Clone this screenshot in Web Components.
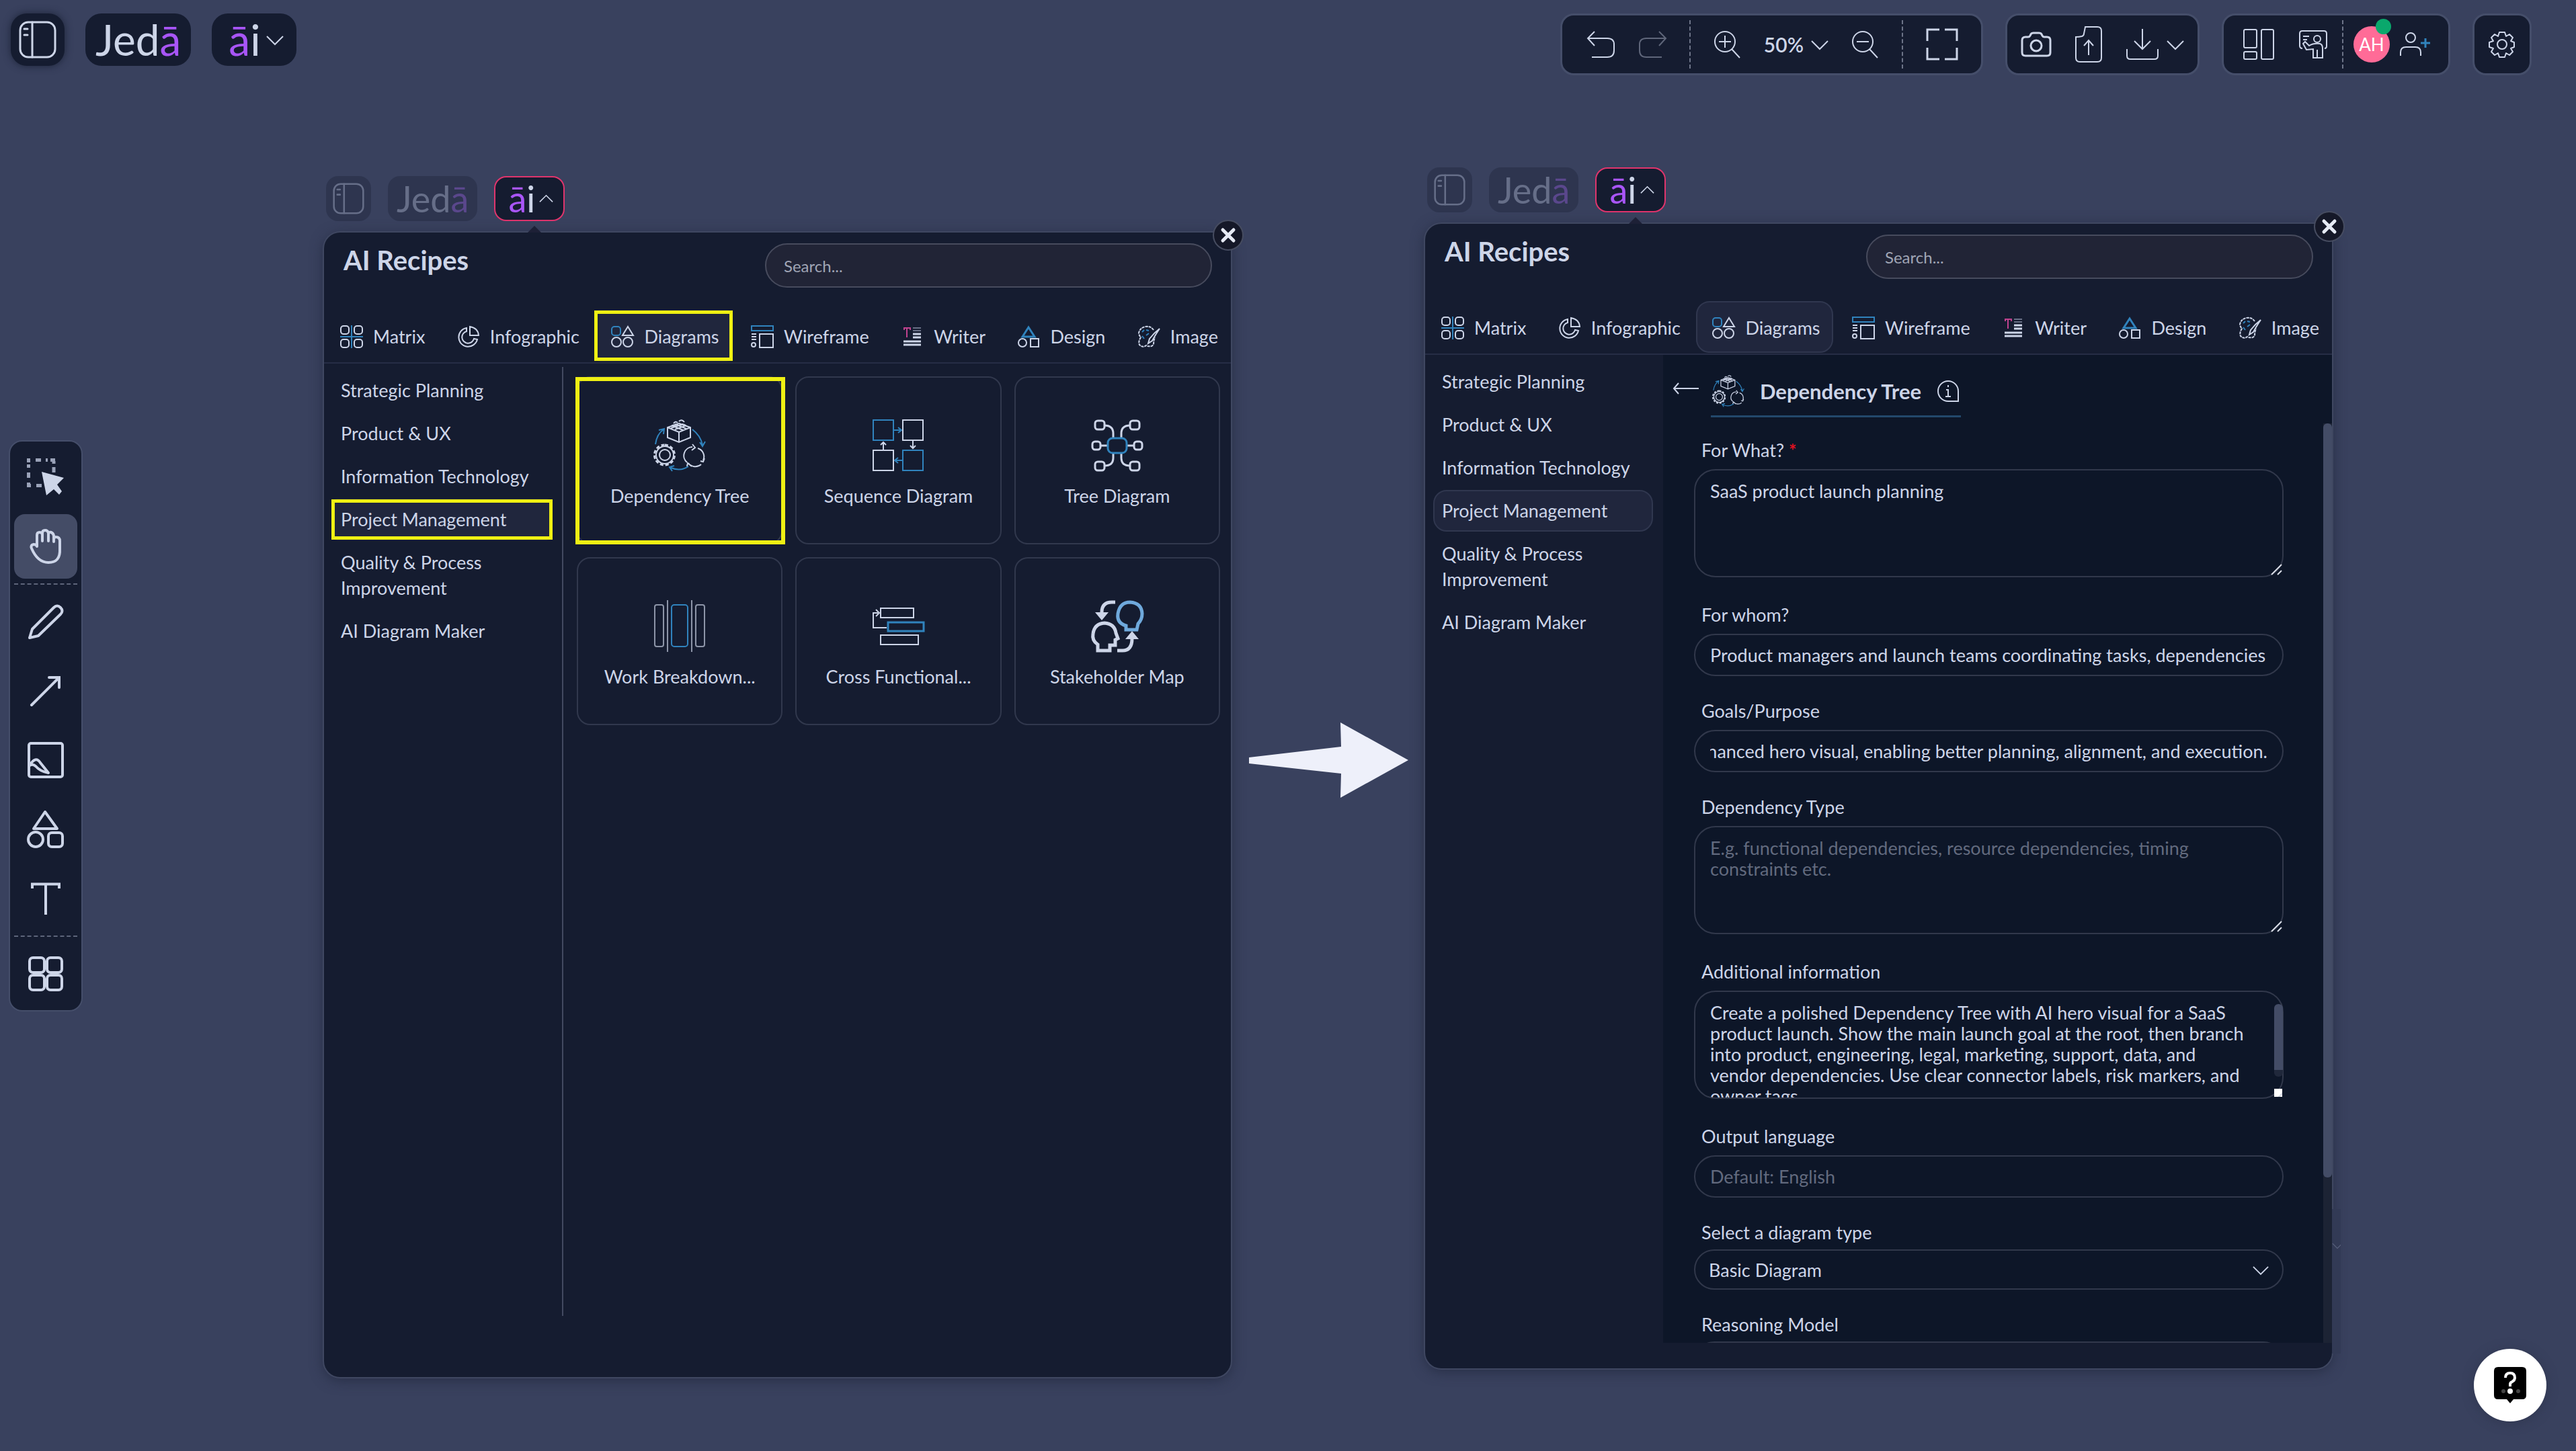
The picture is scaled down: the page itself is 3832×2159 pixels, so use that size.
<!DOCTYPE html>
<html lang="en">
<head>
<meta charset="utf-8">
<title>Jeda AI Recipes</title>
<style>
  body {
    margin: 0;
    background: #39415e;
    color: #cdd5e8;
    font-family: Lato, "Noto Sans", sans-serif;
    font-size: 27px;
  }
</style>
</head>
<body>
<app-shell>
  <logo-bar slot="brand"></logo-bar>
  <top-tools slot="tools"></top-tools>
  <tool-rail slot="rail"></tool-rail>
  <recipe-window slot="first" mark>
    <recipe-grid></recipe-grid>
  </recipe-window>
  <recipe-window slot="second" peek>
    <recipe-form></recipe-form>
  </recipe-window>
</app-shell>
<help-button></help-button>

<script>
const B = 'stroke="#3083bd"';

// name: [width, height, markup]
const ICONS = {
  sidebar: [56, 56, `<g stroke-width="3"><rect x="2" y="2" width="52" height="52" rx="12"/><path d="M20 2V54M8 12h5M8 21h5" stroke-linecap="round"/></g>`],
  undo: [42, 40, `<path d="M11 1 1 11 11 22M1 11H30q10 0 10 9v9q0 10-10 10H7"/>`],
  redo: [42, 40, `<path d="M31 1 41 11 31 22M41 11H12q-10 0-10 9v9q0 10 10 10H35"/>`],
  zoomIn: [41, 41, `<circle cx="17" cy="16" r="15"/><path d="M27 27 39 40M8 16H26M17 7V25"/>`],
  zoomOut: [41, 41, `<circle cx="17" cy="16" r="15"/><path d="M27 27 39 40M8 16H26"/>`],
  full: [48, 48, `<g stroke-width="3"><path d="M2 19V2H20M28 2H46V19M46 29V46H28M20 46H2V29"/></g>`],
  camera: [46, 38, `<g stroke-width="3"><path d="M7 8h4q2 0 3-2l1-2q1-2 4-2h8q3 0 4 2l1 2q1 2 3 2h4q5 0 5 5v18q0 5-5 5H7q-5 0-5-5V13q0-5 5-5z"/><circle cx="23" cy="21" r="8"/></g>`],
  file: [42, 56, `<path d="M16 2H34q6 0 6 6V48q0 6-6 6H8q-6 0-6-6V17Q7 17 11 16q3-1 3-4zM21 44V23M14 30l7-8 7 8"/>`],
  download: [50, 48, `<path d="M25 1V31M13 19 25 31 37 19M2 31V41q0 5 5 5H43q5 0 5-5V31"/>`],
  down: [26, 15, `<path d="M1 2 13 14 25 2"/>`],
  up: [26, 15, `<path d="M1 13 13 1 25 13"/>`],
  layout: [48, 48, `<rect x="2" y="2" width="19" height="27" rx="2"/><rect x="2" y="35" width="19" height="11" rx="2"/><rect x="28" y="2" width="18" height="44" rx="2"/>`],
  present: [44, 44, `<path d="M6 28q-4 0-4-4V6q0-4 4-4H38q4 0 4 4V25q0 3-3 3M7 10H16M7 15H13"/><circle cx="28" cy="14" r="5"/><path d="M22 42V29L12 30 7 21l3-3 6 6q6-4 16-3 4 1 4 7v14zM28 42V30"/>`],
  invite: [46, 38, `<circle cx="16" cy="9" r="7"/><path d="M1 36V31q0-8 8-8H23q8 0 8 8V36"/><path ${B} stroke-width="3" d="M31 17H45M38 10V24"/>`],
  gear: [40, 40, `<circle cx="20" cy="20" r="7"/><path d="M16 2h8l2 6 5-3 5 5-3 5 5 2v7l-5 2 3 5-5 5-5-3-2 6h-8l-2-6-5 3-5-5 3-5-6-2v-7l6-2-3-5 5-5 5 3z" stroke-linejoin="round"/>`],
  select: [56, 56, `<path stroke="#9aa2b8" stroke-width="5" d="M0 2.5H5M13 2.5H21M28 2.5H31M35 2.5H42M2.5 5V6M2.5 9V14M2.5 21V29M2.5 36V43M40 4V8M40 13V21M5 40.5H6M14 40.5H22"/><path fill="currentColor" stroke="none" d="M22 20 55 29 45 39 52 49 48 54 40 46 29 55z"/>`],
  hand: [48, 52, `<g stroke-width="4" stroke-linecap="round" stroke-linejoin="round"><path d="M11 26V9q0-4 4-4t4 4V6q0-4 4-4t5 4V8q1-4 4-3t4 5V16q0-4 3-4 6 0 6 6V30Q46 50 28 50 12 50 3 29q-2-5 3-6 4 0 5 3M19 9V18M28 7V18M36 14V19"/></g>`],
  pencil: [52, 52, `<g stroke-width="4" stroke-linejoin="round"><path d="M2 50 6 37 38 5q5-5 10 0t0 10L15 47z"/></g>`],
  arrow: [46, 46, `<g stroke-width="4" stroke-linecap="round"><path d="M2 44 43 3M28 3H43V18"/></g>`],
  board: [54, 54, `<g stroke-width="4" stroke-linejoin="round"><rect x="2" y="2" width="50" height="50" rx="3"/><path d="M3 35Q12 20 19 31L31 46Q19 44 12 36 8 32 3 35"/></g>`],
  shapes: [56, 58, `<g stroke-width="4" stroke-linejoin="round"><path d="M27 3 45 28H10z"/><circle cx="13" cy="44" r="11"/><rect x="32" y="34" width="21" height="21" rx="5"/></g>`],
  text: [44, 48, `<g stroke-width="4"><path d="M2 9V2.5H42V9M22 2V48"/></g>`],
  apps: [52, 52, `<g stroke-width="4"><rect x="2" y="2" width="22" height="22" rx="5"/><rect x="28" y="2" width="22" height="22" rx="5"/><rect x="2" y="28" width="22" height="22" rx="5"/><rect x="28" y="28" width="22" height="22" rx="5"/></g>`],
  close: [24, 24, `<path stroke="#e6eaf5" stroke-width="5" stroke-linecap="round" d="M4 4 20 20M20 4 4 20"/>`],
  back: [38, 22, `<path d="M1 11H38M8 3 1 11 8 19"/>`],
  info: [34, 34, `<path d="M17 2a15 15 0 0 0 0 30H32V17A15 15 0 0 0 17 2zM14 15h3V25M13 25h8M17 8v3"/>`],
  grip: [18, 18, `<path stroke="#d8dce6" d="M2 17 17 2M11 17 17 11"/>`],

  matrix: [34, 34, `<path ${B} d="M17 0V34M0 17H34"/><rect x="1" y="1" width="12" height="12" rx="4"/><rect x="21" y="1" width="12" height="12" rx="4"/><rect x="1" y="21" width="12" height="12" rx="4"/><rect x="21" y="21" width="12" height="12" rx="4"/>`],
  infographic: [34, 34, `<path d="M19 2V15H32Q31 4 19 2zM14 4A14 14 0 1 0 30 21L25 20A9 9 0 1 1 14 9z"/>`],
  diagrams: [34, 34, `<rect ${B} x="1" y="2" width="13" height="13" rx="4"/><path d="M25 2 33 15H17z"/><circle cx="8" cy="25" r="7"/><circle cx="25" cy="25" r="7"/>`],
  wireframe: [34, 34, `<rect ${B} x="1" y="1" width="32" height="7"/><rect x="13" y="13" width="20" height="20"/><path d="M1 13H8M1 17H8M1 21H8"/><circle cx="4" cy="29" r="3"/>`],
  writer: [34, 34, `<path stroke="#c0428f" d="M5 7V4H14V7M9 4V18"/><path stroke="#697086" d="M18 4H30M18 8H30"/><path d="M18 13H30M18 18H30M4 24H30M4 29H30" stroke-width="3"/>`],
  design: [34, 34, `<path ${B} stroke-width="3" d="M17 3 26 17H8z"/><circle cx="8" cy="26" r="6"/><rect x="20" y="20" width="12" height="12"/>`],
  image: [34, 34, `<path stroke-dasharray="4 1" d="M24 7Q20 1 12 2 3 4 2 12q1 4 3 6-4 6-2 11 5 5 10 1 3 2 8 1 4-2 3-7l2-6"/><path d="M33 5Q28 12 22 23L16 27 18 20Q25 11 33 5z"/><g ${B}><path d="M7 10l3-3M13 7l4 1M7 16l3 4M17 12l-4 3"/></g>`],

  dependency: [78, 78, `<path d="M38 6 55 12V27L38 34 21 27V12zM21 12 38 19 55 12M38 19V34M27 9l17 7M32 7l17 7M32 15l17-6M26 13 44 7"/><path d="M30 6q3-4 6-1M38 3q4-4 8 1M27 10q3-3 7 0M41 9q3-3 7 0"/>
    <circle cx="17" cy="53" r="8"/><path stroke-width="3" stroke-dasharray="5 3" d="M17 38a15 15 0 1 1-1 0z"/><circle cx="17" cy="53" r="13"/>
    <path d="M50 64A13 13 0 0 1 58 41M58 37l4 5-5 4M66 43a13 13 0 0 1 8 18M70 62l4 1 2-5M71 67a13 13 0 0 1-19-2M57 70l-6-5-1 5"/>
    <g ${B}><path d="M3 37Q5 22 15 15M8 16l8-2-1 8M58 15Q70 24 73 38M69 34l4 6 4-7M52 70Q40 78 26 72M31 69l-7 2 4 6"/></g>`],
  sequence: [78, 78, `<g ${B}><rect x="2" y="1" width="30" height="30"/><rect x="46" y="46" width="30" height="30"/><path d="M33 16H42M39 12l5 4-5 4M45 61H36M39 57l-5 4 5 4"/></g><rect x="46" y="1" width="30" height="30"/><rect x="2" y="46" width="30" height="30"/><path d="M17 45V35M13 38l4-4 4 4M61 32V42M57 39l4 4 4-4"/>`],
  tree: [78, 78, `<g stroke-width="3"><rect x="6" y="2" width="14" height="13" rx="4"/><rect x="58" y="2" width="14" height="13" rx="4"/><rect x="2" y="33" width="12" height="12" rx="4"/><rect x="64" y="33" width="12" height="12" rx="4"/><rect x="6" y="63" width="14" height="13" rx="4"/><rect x="58" y="63" width="14" height="13" rx="4"/><path d="M20 9q13 0 13 12v8M58 9q-13 0-13 12v8M20 69q13 0 13-12v-8M58 69q-13 0-13-12v-8M14 39H25M64 39H53"/><rect ${B} x="25" y="28" width="28" height="22" rx="7"/></g>`],
  breakdown: [78, 78, `<g stroke="#8d95a8"><rect x="2" y="7" width="13" height="62" rx="3"/><rect x="63" y="7" width="13" height="62" rx="3"/><path d="M21 0V77M57 0V77"/></g><rect ${B} x="27" y="7" width="24" height="62" rx="4"/>`],
  cross: [78, 78, `<rect x="13" y="12" width="49" height="14"/><rect ${B} stroke-width="3" x="24" y="33" width="53" height="13"/><rect x="13" y="52" width="56" height="14"/><path d="M22 41H2V19H9M6 14l5 5-5 5"/>`],
  stakeholder: [78, 78, `<g stroke-width="5"><path stroke="#6fa9dc" d="M52 44V38Q38 34 40 20 43 3 58 3q17 1 18 17 0 9-6 15l-2 9z"/><path d="M10 75V66Q1 60 3 50 5 35 20 34q15 1 17 15l3 8-4 2v8H28V75zM39 75h8q14 0 14-18M36 3H31Q16 3 16 18"/></g><path fill="currentColor" stroke="none" d="M6 18H26L16 30zM51 58H71L61 46z"/>`]
};

class AppIcon extends HTMLElement {
  connectedCallback() {
    const [w, h, body] = ICONS[this.getAttribute("name")];
    const size = Number(this.getAttribute("size")) || w;
    this.attachShadow({ mode: "open" }).innerHTML = /* html */ `
      <style>
        :host { display: inline-flex; flex: none; }
        svg { display: block; overflow: visible; }
      </style>
      <svg viewBox="0 0 ${w} ${h}" width="${size}" height="${Math.round(size * h / w)}" fill="none" stroke="currentColor" stroke-width="2" aria-hidden="true">${body}</svg>`;
  }
}
customElements.define("app-icon", AppIcon);

class AppShell extends HTMLElement {
  constructor() {
    super();
    this.attachShadow({ mode: "open" }).innerHTML = /* html */ `
      <style>
        :host {
          display: grid;
          grid-template-columns: 123px minmax(0, 1fr);
          grid-template-rows: 134px minmax(0, 1fr);
          min-height: 100vh;
        }
        header {
          grid-area: 1 / 1 / 2 / 3;
          display: flex;
          justify-content: space-between;
          align-items: flex-start;
          padding: 20px 66px 0 16px;
        }
        aside { grid-area: 1 / 1 / 3 / 2; align-self: center; padding-left: 13px; }
        main {
          grid-area: 2 / 2 / 3 / 3;
          display: grid;
          grid-template-columns: 359fr minmax(0, 1349fr) 289fr minmax(0, 1349fr) 363fr;
          align-items: start;
        }
        .first { grid-column: 2; padding-top: 128px; }
        .flow { grid-column: 3; justify-self: center; padding-top: 941px; }
        .flow svg { display: block; }
        .second { grid-column: 4; padding-top: 115px; }
      </style>
      <header><slot name="brand"></slot><slot name="tools"></slot></header>
      <aside><slot name="rail"></slot></aside>
      <main>
        <div class="first"><slot name="first"></slot></div>
        <div class="flow">
          <svg width="238" height="112" viewBox="0 0 238 112" aria-hidden="true"><path fill="#eef0fa" d="M1 52 138 36 137 0 238 56 137 112 138 76 1 61z"/></svg>
        </div>
        <div class="second"><slot name="second"></slot></div>
      </main>`;
  }
}
customElements.define("app-shell", AppShell);

class LogoBar extends HTMLElement {
  connectedCallback() {
    const open = this.hasAttribute("open");
    this.attachShadow({ mode: "open" }).innerHTML = /* html */ `
      <style>
        :host { display: flex; gap: 31px; font-size: 64px; --h: 78px; --pad: 15px; --r: 24px; }
        :host([open]) { gap: 25px; font-size: 54px; --h: 67px; --pad: 13px; --r: 18px; }
        button {
          display: flex;
          justify-content: center;
          align-items: center;
          box-sizing: border-box;
          height: var(--h);
          padding: 0 var(--pad);
          border: 0;
          border-radius: var(--r);
          background: #151c30;
          color: inherit;
          font: inherit;
          line-height: 1;
        }
        .side { padding: 0 12px; box-shadow: 0 0 12px #1d2439; }
        .ai { padding: 0 19px 0 25px; gap: 8px; }
        i { font-style: normal; color: #a855f7; }
        :host([open]) .side { padding: 0 10px; }
        :host([open]) .dim { opacity: .3; box-shadow: none; }
        :host([open]) .ai { border: 2px solid #e0346c; padding: 0 15px 0 19px; gap: 6px; }
      </style>
      <button class="side dim" aria-label="Toggle sidebar"><app-icon name="sidebar" size="${open ? 47 : 56}"></app-icon></button>
      <button class="dim"><span>Jed<i>ā</i></span></button>
      <button class="ai"><span><i>ā</i>i</span><app-icon name="${open ? "up" : "down"}" size="${open ? 21 : 26}"></app-icon></button>`;
  }
}
customElements.define("logo-bar", LogoBar);

class TopTools extends HTMLElement {
  constructor() {
    super();
    this.attachShadow({ mode: "open" }).innerHTML = /* html */ `
      <style>
        :host { display: flex; gap: 33px; }
        .group {
          display: flex;
          align-items: center;
          box-sizing: border-box;
          height: 92px;
          padding: 0 21px;
          gap: 26px;
          border: 3px solid #454e6a;
          border-radius: 20px;
          background: #151c30;
        }
        button {
          display: flex;
          align-items: center;
          gap: 11px;
          padding: 0;
          border: 0;
          background: none;
          color: inherit;
          font: 600 30px Lato, sans-serif;
        }
        hr { width: 0; height: 72px; margin: 0; border: 0; border-left: 2px dashed #6d7488; }
        .edit { gap: 34px; padding: 0 34px 0 37px; }
        .off { opacity: .4; }
        .avatar {
          position: relative;
          justify-content: center;
          width: 54px;
          height: 54px;
          border-radius: 50%;
          background: #ff6b97;
          color: #fff;
          font: 26px Lato, sans-serif;
        }
        .avatar::after {
          content: "";
          position: absolute;
          top: -11px;
          right: -2px;
          width: 23px;
          height: 23px;
          border-radius: 50%;
          background: #0aa86c;
        }
        .people { gap: 15px; padding: 0 26px 0 28px; }
        .present { margin: 0 6px 0 20px; }
        .share { padding: 0 20px; gap: 34px; }
      </style>
      <div class="group edit">
        <button aria-label="Undo"><app-icon name="undo"></app-icon></button>
        <button class="off" aria-label="Redo"><app-icon name="redo"></app-icon></button>
        <hr>
        <button aria-label="Zoom in"><app-icon name="zoomIn"></app-icon></button>
        <button>50%<app-icon name="down"></app-icon></button>
        <button aria-label="Zoom out"><app-icon name="zoomOut"></app-icon></button>
        <hr>
        <button aria-label="Full screen"><app-icon name="full"></app-icon></button>
      </div>
      <div class="group share">
        <button aria-label="Screenshot"><app-icon name="camera"></app-icon></button>
        <button aria-label="Import"><app-icon name="file"></app-icon></button>
        <button aria-label="Export"><app-icon name="download"></app-icon><app-icon name="down"></app-icon></button>
      </div>
      <div class="group people">
        <button aria-label="Layout"><app-icon name="layout"></app-icon></button>
        <button class="present" aria-label="Present"><app-icon name="present"></app-icon></button>
        <hr>
        <button class="avatar">AH</button>
        <button aria-label="Invite"><app-icon name="invite"></app-icon></button>
      </div>
      <div class="group"><button aria-label="Settings"><app-icon name="gear"></app-icon></button></div>`;
  }
}
customElements.define("top-tools", TopTools);

class ToolRail extends HTMLElement {
  constructor() {
    super();
    const tool = (name, label, cls = "") =>
      `<button class="${cls}" aria-label="${label}"><app-icon name="${name}"></app-icon></button>`;
    this.attachShadow({ mode: "open" }).innerHTML = /* html */ `
      <style>
        :host {
          display: flex;
          flex-direction: column;
          gap: 7px;
          padding: 5px 6px 6px;
          border: 2px solid #454e6a;
          border-radius: 20px;
          background: #151c30;
        }
        button {
          display: flex;
          justify-content: center;
          align-items: center;
          height: 96px;
          padding: 0;
          border: 0;
          border-radius: 16px;
          background: none;
          color: inherit;
        }
        .on { background: #444c66; }
        hr { align-self: stretch; margin: 0; border: 0; border-top: 2px dashed #5d657a; }
      </style>
      ${tool("select", "Select")}
      ${tool("hand", "Pan", "on")}
      <hr>
      ${tool("pencil", "Draw")}
      ${tool("arrow", "Connector")}
      ${tool("board", "Sticky note")}
      ${tool("shapes", "Shapes")}
      ${tool("text", "Text")}
      <hr>
      ${tool("apps", "More tools")}`;
  }
}
customElements.define("tool-rail", ToolRail);

const TABS = ["Matrix", "Infographic", "Diagrams", "Wireframe", "Writer", "Design", "Image"];
const TOPICS = ["Strategic Planning", "Product &amp; UX", "Information Technology", "Project Management", "Quality &amp; Process Improvement", "AI Diagram Maker"];

class RecipeWindow extends HTMLElement {
  constructor() {
    super();
    const tabs = TABS.map(t => `<button role="tab" class="tab${t === "Diagrams" ? " on" : ""}"><app-icon name="${t.toLowerCase()}"></app-icon>${t}</button>`).join("");
    const topics = TOPICS.map(t => `<button class="topic${t === "Project Management" ? " on" : ""}">${t}</button>`).join("");
    this.attachShadow({ mode: "open" }).innerHTML = /* html */ `
      <style>
        :host { display: block; }
        logo-bar { padding: 0 0 17px 3px; }
        section {
          position: relative;
          display: flex;
          flex-direction: column;
          box-sizing: border-box;
          height: calc(100vh - 456px);
          border-radius: 24px;
          background: #151c30;
          box-shadow: 0 0 0 2px #3f4761, 0 4px 20px #262d44;
        }
        section::before {
          content: "";
          position: absolute;
          left: 303px;
          top: -10px;
          border: 10px solid transparent;
          border-top-width: 0;
          border-bottom-color: #1d2036;
        }
        .head { display: flex; justify-content: space-between; padding: 16px 28px 0 29px; }
        h2 { margin: 0; font-size: 40px; line-height: 50px; }
        input {
          flex: 0 1 665px;
          min-width: 0;
          box-sizing: border-box;
          height: 66px;
          padding: 0 26px;
          border: 2px solid #474b5d;
          border-radius: 33px;
          background: #212436;
          color: inherit;
          font: 24px Lato, sans-serif;
        }
        input::placeholder { color: #a0a5b5; opacity: 1; }
        .close {
          position: absolute;
          top: -19px;
          right: -19px;
          display: flex;
          justify-content: center;
          align-items: center;
          width: 46px;
          height: 46px;
          padding: 0;
          border: 2px solid #464c60;
          border-radius: 50%;
          background: #151828;
        }
        .tabs {
          display: flex;
          justify-content: space-between;
          margin-top: 33px;
          padding: 0 0 1px;
          border-bottom: 2px solid #262d45;
        }
        button { color: inherit; font: inherit; background: none; border: 0; }
        .tab {
          position: relative;
          display: flex;
          align-items: center;
          gap: 15px;
          height: 77px;
          padding: 2px 17px 0 22px;
          border: 2px solid transparent;
          border-radius: 20px;
          white-space: nowrap;
        }
        .on { background: #20263d; border-color: #30374f; }
        .body { flex: 1; display: flex; min-height: 0; }
        nav {
          flex: none;
          display: flex;
          flex-direction: column;
          gap: 2px;
          box-sizing: border-box;
          width: 354px;
          padding: 9px 15px 0 12px;
        }
        .topic {
          position: relative;
          padding: 10px 11px;
          border: 2px solid transparent;
          border-radius: 20px;
          line-height: 38px;
          text-align: left;
        }
        .topic.on { background: #20263d; border-color: #30374f; }
        :host([mark]) .on { border-color: #20263d; border-radius: 8px; }
        :host([mark]) .on::after {
          content: "";
          position: absolute;
          inset: -1px -3px;
          border: 5px solid #eff013;
        }
        slot { display: block; flex: 1; min-width: 0; }
        .peek { display: none; }
        :host([peek]) .peek {
          position: absolute;
          left: 100%;
          bottom: 22px;
          display: block;
          box-sizing: border-box;
          width: 13px;
          height: 215px;
          padding-top: 32px;
          overflow: hidden;
          background: #323a55;
          color: #59617c;
        }
      </style>
      <logo-bar open></logo-bar>
      <section role="dialog" aria-label="AI Recipes">
        <div class="head">
          <h2>AI Recipes</h2>
          <input type="search" placeholder="Search..." aria-label="Search recipes">
        </div>
        <div class="tabs" role="tablist">${tabs}</div>
        <div class="body">
          <nav>${topics}</nav>
          <slot></slot>
        </div>
        <button class="close" aria-label="Close"><app-icon name="close"></app-icon></button>
        <div class="peek"><app-icon name="down" size="16"></app-icon></div>
      </section>`;
  }
}
customElements.define("recipe-window", RecipeWindow);

const CARDS = [
  ["dependency", "Dependency Tree"], ["sequence", "Sequence Diagram"], ["tree", "Tree Diagram"],
  ["breakdown", "Work Breakdown..."], ["cross", "Cross Functional..."], ["stakeholder", "Stakeholder Map"]
];

class RecipeGrid extends HTMLElement {
  constructor() {
    super();
    const cards = CARDS.map(([icon, label], i) =>
      `<button class="${i ? "" : "on"}"><app-icon name="${icon}"></app-icon>${label}</button>`).join("");
    this.attachShadow({ mode: "open" }).innerHTML = /* html */ `
      <style>
        :host {
          display: block;
          box-sizing: border-box;
          height: calc(100% - 96px);
          margin-top: 5px;
          padding: 14px 16px 0 20px;
          border-left: 2px solid #434a61;
        }
        div { display: grid; grid-template-columns: repeat(3, minmax(0, 1fr)); gap: 19px; }
        button {
          position: relative;
          display: flex;
          flex-direction: column;
          align-items: center;
          gap: 19px;
          height: 250px;
          padding: 62px 0 0;
          border: 2px solid #31384d;
          border-radius: 20px;
          background: none;
          color: inherit;
          font: inherit;
          line-height: 34px;
          white-space: nowrap;
        }
        .on::after { content: ""; position: absolute; inset: -1px -6px -2px -4px; border: 6px solid #eff013; }
      </style>
      <div>${cards}</div>`;
  }
}
customElements.define("recipe-grid", RecipeGrid);

class FormField extends HTMLElement {
  connectedCallback() {
    const kind = this.getAttribute("kind") || "input";
    const value = this.getAttribute("value") || "";
    const hint = this.getAttribute("hint") || "";
    const controls = {
      input: `<input id="c" value="${value}" placeholder="${hint}">`,
      area: `<textarea id="c" placeholder="${hint}">${value}</textarea><app-icon class="grip" name="grip"></app-icon><span class="bar"></span>`,
      select: `<select id="c"><option>${value}</option></select><app-icon class="caret" name="down" size="24"></app-icon>`
    };
    this.attachShadow({ mode: "open" }).innerHTML = /* html */ `
      <style>
        :host { display: block; margin-bottom: 35px; }
        :host([kind="area"]) { margin-bottom: 39px; }
        label { display: block; margin: 0 0 11px 11px; line-height: 34px; }
        :host([kind="select"]) label { margin-bottom: 8px; }
        b { color: #e01020; }
        .box { position: relative; display: flex; }
        input, textarea, select {
          flex: 1;
          min-width: 0;
          box-sizing: border-box;
          height: 63px;
          margin: 0;
          padding: 0 22px;
          border: 2px solid #31384b;
          border-radius: 32px;
          background: none;
          color: inherit;
          font: inherit;
        }
        textarea {
          height: 161px;
          padding: 15px 46px 0 22px;
          line-height: 31px;
          resize: none;
          overflow: hidden;
        }
        select { appearance: none; height: 60px; padding: 0 20px; }
        ::placeholder { color: #626a7e; opacity: 1; }
        .grip { position: absolute; right: 2px; bottom: 3px; }
        .caret { position: absolute; right: 22px; top: 24px; }
        .bar { display: none; }
        :host([scroll]) .bar {
          position: absolute;
          right: 1px;
          top: 20px;
          display: block;
          width: 13px;
          height: 98px;
          border-bottom: 10px solid #20283b;
          border-radius: 6px;
          background: #434c66;
        }
        :host([scroll]) .grip { width: 12px; height: 12px; background: #fff; overflow: hidden; }
      </style>
      <label for="c">${this.getAttribute("label")}${this.hasAttribute("required") ? " <b>*</b>" : ""}</label>
      <div class="box">${controls[kind]}</div>`;
    // long values show their end
    const input = this.shadowRoot.querySelector("input");
    if (input && this.hasAttribute("end")) input.scrollLeft = input.scrollWidth;
  }
}
customElements.define("form-field", FormField);

class RecipeForm extends HTMLElement {
  constructor() {
    super();
    this.attachShadow({ mode: "open" }).innerHTML = /* html */ `
      <style>
        :host {
          display: flex;
          flex-direction: column;
          height: calc(100% - 38px);
          background: #0d1628;
        }
        header { display: flex; gap: 18px; padding: 30px 15px 9px; }
        button { display: flex; padding: 0; border: 0; background: none; color: inherit; }
        .back { align-self: flex-start; padding-top: 9px; }
        .title {
          display: flex;
          align-items: center;
          gap: 23px;
          height: 60px;
          padding: 0 2px;
          border-bottom: 3px solid #23486b;
        }
        .title > * { margin-bottom: 12px; }
        h3 { margin-top: 0; font-size: 31px; line-height: 36px; }
        .scroll { flex: 1; display: flex; min-height: 0; }
        form { flex: 1; min-width: 0; padding: 23px 59px 0 46px; overflow: hidden; }
        .track { width: 13px; background: #1c2334; }
        .track span { display: block; height: 82%; border-radius: 6px; background: #434c66; }
      </style>
      <header>
        <button class="back" aria-label="Back"><app-icon name="back"></app-icon></button>
        <div class="title">
          <app-icon name="dependency" size="48"></app-icon>
          <h3>Dependency Tree</h3>
          <button aria-label="Info"><app-icon name="info"></app-icon></button>
        </div>
      </header>
      <div class="scroll">
        <form>
          <form-field kind="area" label="For What?" required value="SaaS product launch planning"></form-field>
          <form-field label="For whom?" value="Product managers and launch teams coordinating tasks, dependencies"></form-field>
          <form-field label="Goals/Purpose" end value="enhanced hero visual, enabling better planning, alignment, and execution."></form-field>
          <form-field kind="area" label="Dependency Type" hint="E.g. functional dependencies, resource dependencies, timing constraints etc."></form-field>
          <form-field kind="area" scroll label="Additional information" value="Create a polished Dependency Tree with AI hero visual for a SaaS product launch. Show the main launch goal at the root, then branch into product, engineering, legal, marketing, support, data, and vendor dependencies. Use clear connector labels, risk markers, and owner tags."></form-field>
          <form-field label="Output language" hint="Default: English"></form-field>
          <form-field kind="select" label="Select a diagram type" value="Basic Diagram"></form-field>
          <form-field kind="select" label="Reasoning Model" value=""></form-field>
        </form>
        <div class="track"><span></span></div>
      </div>`;
  }
}
customElements.define("recipe-form", RecipeForm);

class HelpButton extends HTMLElement {
  constructor() {
    super();
    this.attachShadow({ mode: "open" }).innerHTML = /* html */ `
      <style>
        :host { position: fixed; right: 44px; bottom: 44px; }
        button {
          display: flex;
          justify-content: center;
          align-items: center;
          width: 108px;
          height: 108px;
          padding: 0;
          border: 0;
          border-radius: 50%;
          background: #fff;
          box-shadow: 0 2px 16px #303750;
        }
      </style>
      <button aria-label="Help">
        <svg width="48" height="54" viewBox="0 0 48 54" fill="none" aria-hidden="true">
          <path fill="#000" d="M6 0H42q6 0 6 6V42q0 6-6 6H29l-5 6-5-6H6q-6 0-6-6V6q0-6 6-6z"/>
          <path stroke="#fff" stroke-width="4" d="M17 16q0-7 7-7t7 7q0 4-4 6-3 1-3 4v3"/>
          <circle cx="24" cy="36" r="4" fill="#fff"/>
          <circle cx="14" cy="36" r="3" fill="#444"/><circle cx="36" cy="36" r="3" fill="#444"/>
        </svg>
      </button>`;
  }
}
customElements.define("help-button", HelpButton);
</script>
</body>
</html>
